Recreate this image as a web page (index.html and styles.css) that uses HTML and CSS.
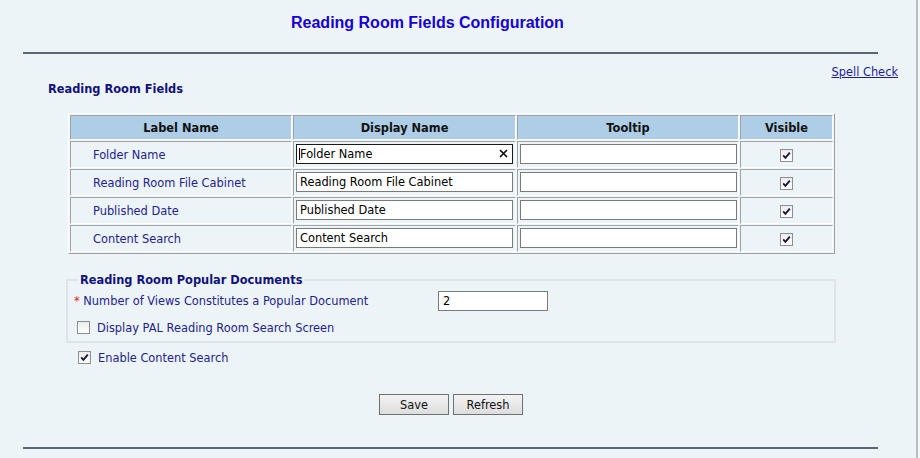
FILE: index.html
```html
<!DOCTYPE html>
<html lang="en">
<head>
<meta charset="utf-8">
<title>Reading Room Fields Configuration</title>
<link rel="stylesheet" href="styles.css">
</head>
<body>
<div class="page">
  <h1 class="title">Reading Room Fields Configuration</h1>
  <div class="rule"></div>
  <div class="spell"><a href="#">Spell Check</a></div>
  <h2 class="section">Reading Room Fields</h2>

  <table class="fields">
    <thead>
      <tr>
        <th class="c-label">Label Name</th>
        <th class="c-display">Display Name</th>
        <th class="c-tip">Tooltip</th>
        <th class="c-vis">Visible</th>
      </tr>
    </thead>
    <tbody>
      <tr>
        <td class="lbl">Folder Name</td>
        <td class="inp"><span class="field focused"><input type="text" class="txt" value="Folder Name"><span class="caret"></span><span class="clear"><svg width="9" height="9" viewBox="0 0 9 9"><path d="M1 1 L8 8 M8 1 L1 8" stroke="#111" stroke-width="1.7"/></svg></span></span></td>
        <td class="inp"><input type="text" class="txt"></td>
        <td class="vis"><span class="cb"><svg width="11" height="11" viewBox="0 0 11 11"><path d="M2.2 5.4 L4.4 7.8 L8.8 2.6" fill="none" stroke="#14143c" stroke-width="1.8"/></svg></span></td>
      </tr>
      <tr>
        <td class="lbl">Reading Room File Cabinet</td>
        <td class="inp"><input type="text" class="txt" value="Reading Room File Cabinet"></td>
        <td class="inp"><input type="text" class="txt"></td>
        <td class="vis"><span class="cb"><svg width="11" height="11" viewBox="0 0 11 11"><path d="M2.2 5.4 L4.4 7.8 L8.8 2.6" fill="none" stroke="#14143c" stroke-width="1.8"/></svg></span></td>
      </tr>
      <tr>
        <td class="lbl">Published Date</td>
        <td class="inp"><input type="text" class="txt" value="Published Date"></td>
        <td class="inp"><input type="text" class="txt"></td>
        <td class="vis"><span class="cb"><svg width="11" height="11" viewBox="0 0 11 11"><path d="M2.2 5.4 L4.4 7.8 L8.8 2.6" fill="none" stroke="#14143c" stroke-width="1.8"/></svg></span></td>
      </tr>
      <tr>
        <td class="lbl">Content Search</td>
        <td class="inp"><input type="text" class="txt" value="Content Search"></td>
        <td class="inp"><input type="text" class="txt"></td>
        <td class="vis"><span class="cb"><svg width="11" height="11" viewBox="0 0 11 11"><path d="M2.2 5.4 L4.4 7.8 L8.8 2.6" fill="none" stroke="#14143c" stroke-width="1.8"/></svg></span></td>
      </tr>
    </tbody>
  </table>

  <fieldset class="popular">
    <legend>Reading Room Popular Documents</legend>
    <div class="row-num">
      <span class="num-label"><span class="req">*</span> Number of Views Constitutes a Popular Document</span>
      <input type="text" class="txt num" value="2">
    </div>
    <div class="row-check pal">
      <span class="cb"></span>
      <span class="check-label">Display PAL Reading Room Search Screen</span>
    </div>
  </fieldset>

  <div class="row-check enable">
    <span class="cb"><svg width="11" height="11" viewBox="0 0 11 11"><path d="M2.2 5.4 L4.4 7.8 L8.8 2.6" fill="none" stroke="#14143c" stroke-width="1.8"/></svg></span>
    <span class="check-label">Enable Content Search</span>
  </div>

  <div class="buttons">
    <button type="button" class="btn">Save</button>
    <button type="button" class="btn">Refresh</button>
  </div>

  <div class="rule bottom"></div>
</div>
</body>
</html>
```

FILE: styles.css
```css
html, body {
  margin: 0;
  padding: 0;
  background: #f5f7f8;
}

.page {
  width: 916px;
  height: 458px;
  overflow: hidden;
  background: #edf4f8;
  border-right: 2px solid #b9bdc0;
  font-family: "DejaVu Sans", Verdana, sans-serif;
  font-size: 11.4px;
  color: #23238e;
}

.title {
  margin: 0;
  padding: 13px 0 0 291px;
  font-family: "Liberation Sans", Arial, sans-serif;
  font-size: 16px;
  line-height: 19px;
  font-weight: bold;
  color: #1500d6;
}

.rule {
  margin: 20px 0 0 23px;
  width: 855px;
  height: 2px;
  background: #5b6770;
}

.spell {
  margin-top: 11px;
  padding-right: 18px;
  text-align: right;
  line-height: 14px;
}

.spell a {
  color: #1c1c9c;
  text-decoration: underline;
}

.section {
  margin: 3px 0 0 48px;
  font-size: 11.4px;
  line-height: 14px;
  font-weight: bold;
  color: #12127a;
}

.fields {
  margin: 17px 0 0 68px;
  border-collapse: separate;
  border-spacing: 1px;
  border: 1px solid;
  border-color: #ffffff #a0a0a0 #a0a0a0 #ffffff;
  table-layout: fixed;
}

.fields th,
.fields td {
  box-sizing: border-box;
  border: 1px solid;
  border-color: #a3a3a3 #ffffff #ffffff #a3a3a3;
  padding: 0;
}

.fields th {
  height: 25px;
  background: #aecde6;
  color: #111111;
  font-weight: bold;
  text-align: center;
  vertical-align: middle;
}

.fields td {
  height: 27px;
  vertical-align: middle;
}

.c-label { width: 222px; }
.c-display { width: 223px; }
.c-tip { width: 222px; }
.c-vis { width: 93px; }

.fields td.lbl {
  padding-left: 22px;
  color: #23238e;
}

.fields td.inp {
  padding: 0 0 1px 2px;
}

.fields td.vis {
  text-align: center;
  padding-top: 0;
}

.txt {
  box-sizing: border-box;
  display: block;
  width: 217px;
  height: 20px;
  margin: 0;
  padding: 0 3px;
  border: 1px solid #7a7a7a;
  background: #ffffff;
  font-family: "DejaVu Sans", Verdana, sans-serif;
  font-size: 11.4px;
  color: #000000;
  outline: none;
}

.field {
  position: relative;
  display: block;
  width: 217px;
}

.field.focused .txt {
  border-color: #1a1a1a;
}

.caret {
  position: absolute;
  left: 3px;
  top: 4px;
  width: 1px;
  height: 12px;
  background: #000000;
}

.clear {
  position: absolute;
  right: 5px;
  top: 5px;
  width: 9px;
  height: 9px;
  display: flex;
}

.cb {
  box-sizing: border-box;
  display: inline-flex;
  align-items: center;
  justify-content: center;
  width: 13px;
  height: 13px;
  border: 1px solid #8e8e8e;
  background: linear-gradient(#ececec, #ffffff);
  vertical-align: middle;
}

.popular {
  box-sizing: border-box;
  width: 770px;
  margin: 19px 0 0 66px;
  padding: 4px 0 7px 0;
  border: 2px solid #e0e4e7;
  min-width: 0;
}

.popular legend {
  margin-left: 10px;
  padding: 0 2px;
  font-weight: bold;
  line-height: 14px;
  color: #12127a;
}

.row-num {
  display: flex;
  align-items: center;
  padding-left: 6px;
  height: 20px;
}

.num-label {
  width: 364px;
  color: #23238e;
}

.req {
  color: #e0201c;
}

.txt.num {
  width: 110px;
  padding-left: 4px;
}

.row-check {
  display: flex;
  align-items: center;
  gap: 7px;
  height: 13px;
}

.row-check.pal {
  margin-top: 10px;
  padding-left: 9px;
}

.row-check.enable {
  margin-top: 8px;
  padding-left: 78px;
}

.check-label {
  color: #23238e;
  line-height: 14px;
}

.buttons {
  display: flex;
  gap: 4px;
  margin-top: 30px;
  padding-left: 379px;
}

.btn {
  box-sizing: border-box;
  width: 70px;
  height: 21px;
  margin: 0;
  padding: 0;
  border: 1px solid #707070;
  background: linear-gradient(#f3f3f3, #dddddd);
  font-family: "DejaVu Sans", Verdana, sans-serif;
  font-size: 11.4px;
  color: #111111;
}

.rule.bottom {
  margin-top: 32px;
}
```
